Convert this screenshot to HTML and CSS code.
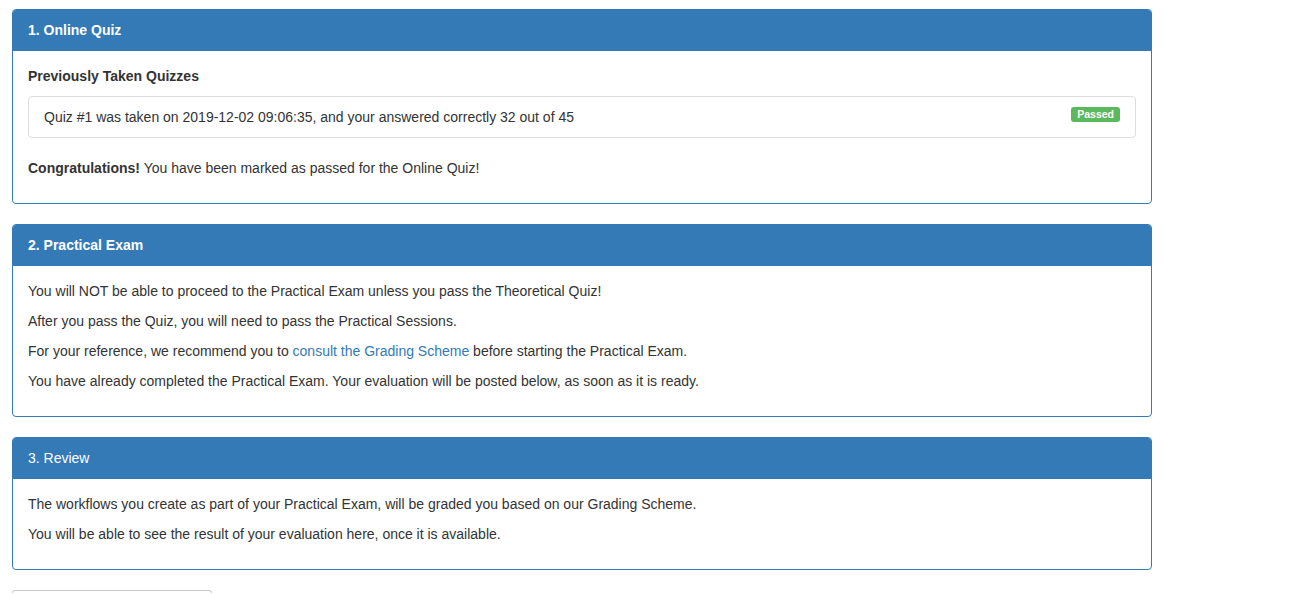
FILE: index.html
```html
<!DOCTYPE html>
<html>
<head>
<meta charset="utf-8">
<link rel="stylesheet" href="styles.css">
</head>
<body>
<div class="page">
  <div class="panel">
    <div class="panel-heading bold">1. Online Quiz</div>
    <div class="panel-body">
      <h5 class="sub-title">Previously Taken Quizzes</h5>
      <div class="list-group">
        <div class="list-item">
          <span class="label-success">Passed</span>
          Quiz #1 was taken on 2019-12-02 09:06:35, and your answered correctly 32 out of 45
        </div>
      </div>
      <p><strong>Congratulations!</strong> You have been marked as passed for the Online Quiz!</p>
    </div>
  </div>

  <div class="panel">
    <div class="panel-heading bold">2. Practical Exam</div>
    <div class="panel-body">
      <p>You will NOT be able to proceed to the Practical Exam unless you pass the Theoretical Quiz!</p>
      <p>After you pass the Quiz, you will need to pass the Practical Sessions.</p>
      <p>For your reference, we recommend you to <a href="#">consult the Grading Scheme</a> before starting the Practical Exam.</p>
      <p>You have already completed the Practical Exam. Your evaluation will be posted below, as soon as it is ready.</p>
    </div>
  </div>

  <div class="panel">
    <div class="panel-heading">3. Review</div>
    <div class="panel-body">
      <p>The workflows you create as part of your Practical Exam, will be graded you based on our Grading Scheme.</p>
      <p>You will be able to see the result of your evaluation here, once it is available.</p>
    </div>
  </div>

  <div class="btn-box"></div>
</div>
</body>
</html>
```
FILE: styles.css
```css
html, body {
  margin: 0;
  padding: 0;
  background: #fff;
}
body {
  font-family: "Liberation Sans", Arial, Helvetica, sans-serif;
  font-size: 14px;
  line-height: 20px;
  color: #333;
  overflow: hidden;
}
.page {
  width: 1140px;
  padding: 9px 12px 0;
}
.panel {
  border: 1px solid #337ab7;
  border-radius: 4px;
  margin-bottom: 20px;
  background: #fff;
}
.panel-heading {
  background: #337ab7;
  color: #fff;
  padding: 10px 15px;
  border-bottom: 1px solid #337ab7;
  border-radius: 3px 3px 0 0;
}
.bold {
  font-weight: bold;
}
.panel-body {
  padding: 15px;
}
.sub-title {
  margin: 0 0 10px;
  font-size: 14px;
  line-height: 20px;
  font-weight: bold;
}
.list-group {
  margin-bottom: 20px;
}
.list-item {
  border: 1px solid #ddd;
  border-radius: 4px;
  padding: 10px 15px;
}
.label-success {
  float: right;
  background: #5cb85c;
  color: #fff;
  font-size: 10.5px;
  font-weight: bold;
  line-height: 1;
  padding: 2px 6px 2px;
  border-radius: 3px;
}
p {
  margin: 0 0 10px;
}
a {
  color: #337ab7;
  text-decoration: none;
}
.btn-box {
  width: 198px;
  height: 2px;
  border: 1px solid #ccc;
  border-bottom: 0;
  border-radius: 4px 4px 0 0;
}
```
